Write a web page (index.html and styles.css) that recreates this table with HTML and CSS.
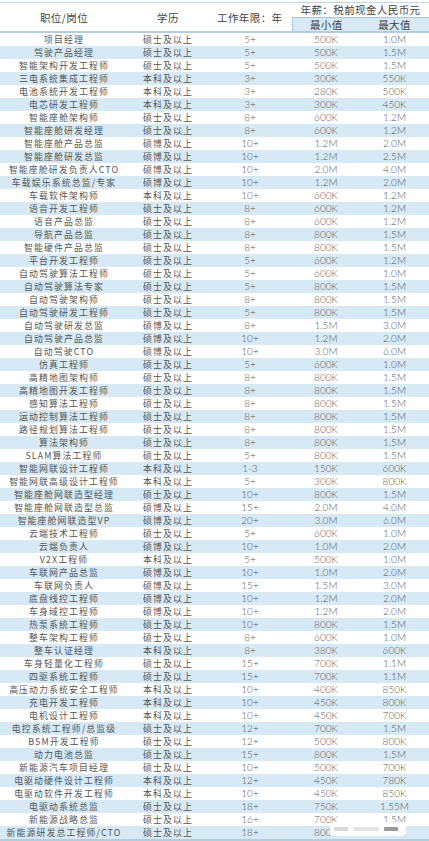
FILE: index.html
```html
<!DOCTYPE html>
<html lang="zh">
<head>
<meta charset="utf-8">
<title>薪酬表</title>
<link rel="stylesheet" href="styles.css">
</head>
<body>
<div class="sheet">
<table class="pay">
<colgroup><col class="c1"><col class="c2"><col class="c3"><col class="c4"><col class="c5"></colgroup>
<thead>
<tr class="h1"><th rowspan="2">职位/岗位</th><th rowspan="2">学历</th><th rowspan="2">工作年限：年</th><th colspan="2" class="salary">年薪：税前现金人民币元</th></tr>
<tr class="h2"><th class="sub first">最小值</th><th class="sub">最大值</th></tr>
</thead>
<tbody>
<tr><td>项目经理</td><td>硕士及以上</td><td>5+</td><td>500K</td><td>1.0M</td></tr>
<tr><td>驾驶产品经理</td><td>硕士及以上</td><td>5+</td><td>500K</td><td>1.5M</td></tr>
<tr><td>智能架构开发工程师</td><td>硕士及以上</td><td>5+</td><td>500K</td><td>1.5M</td></tr>
<tr><td>三电系统集成工程师</td><td>本科及以上</td><td>3+</td><td>300K</td><td>550K</td></tr>
<tr><td>电池系统开发工程师</td><td>本科及以上</td><td>3+</td><td>280K</td><td>500K</td></tr>
<tr><td>电芯研发工程师</td><td>本科及以上</td><td>3+</td><td>300K</td><td>450K</td></tr>
<tr><td>智能座舱架构师</td><td>硕士及以上</td><td>8+</td><td>600K</td><td>1.2M</td></tr>
<tr><td>智能座舱研发经理</td><td>硕士及以上</td><td>8+</td><td>600K</td><td>1.2M</td></tr>
<tr><td>智能座舱产品总监</td><td>硕博及以上</td><td>10+</td><td>1.2M</td><td>2.0M</td></tr>
<tr><td>智能座舱研发总监</td><td>硕博及以上</td><td>10+</td><td>1.2M</td><td>2.5M</td></tr>
<tr><td>智能座舱研发负责人CTO</td><td>硕博及以上</td><td>10+</td><td>2.0M</td><td>4.0M</td></tr>
<tr><td>车载娱乐系统总监/专家</td><td>硕博及以上</td><td>10+</td><td>1.2M</td><td>2.0M</td></tr>
<tr><td>车载软件架构师</td><td>本科及以上</td><td>10+</td><td>600K</td><td>1.2M</td></tr>
<tr><td>语音开发工程师</td><td>硕士及以上</td><td>8+</td><td>600K</td><td>1.2M</td></tr>
<tr><td>语音产品总监</td><td>硕士及以上</td><td>8+</td><td>600K</td><td>1.2M</td></tr>
<tr><td>导航产品总监</td><td>硕士及以上</td><td>8+</td><td>800K</td><td>1.5M</td></tr>
<tr><td>智能硬件产品总监</td><td>硕士及以上</td><td>8+</td><td>800K</td><td>1.5M</td></tr>
<tr><td>平台开发工程师</td><td>硕士及以上</td><td>5+</td><td>600K</td><td>1.2M</td></tr>
<tr><td>自动驾驶算法工程师</td><td>硕士及以上</td><td>5+</td><td>600K</td><td>1.0M</td></tr>
<tr><td>自动驾驶算法专家</td><td>硕士及以上</td><td>5+</td><td>800K</td><td>1.5M</td></tr>
<tr><td>自动驾驶架构师</td><td>硕士及以上</td><td>8+</td><td>800K</td><td>1.5M</td></tr>
<tr><td>自动驾驶研发工程师</td><td>硕士及以上</td><td>5+</td><td>800K</td><td>1.5M</td></tr>
<tr><td>自动驾驶研发总监</td><td>硕博及以上</td><td>8+</td><td>1.5M</td><td>3.0M</td></tr>
<tr><td>自动驾驶产品总监</td><td>硕博及以上</td><td>10+</td><td>1.2M</td><td>2.0M</td></tr>
<tr><td>自动驾驶CTO</td><td>硕博及以上</td><td>10+</td><td>3.0M</td><td>6.0M</td></tr>
<tr><td>仿真工程师</td><td>硕士及以上</td><td>5+</td><td>600K</td><td>1.0M</td></tr>
<tr><td>高精地图架构师</td><td>硕士及以上</td><td>8+</td><td>800K</td><td>1.5M</td></tr>
<tr><td>高精地图开发工程师</td><td>硕士及以上</td><td>8+</td><td>800K</td><td>1.5M</td></tr>
<tr><td>感知算法工程师</td><td>硕士及以上</td><td>8+</td><td>800K</td><td>1.5M</td></tr>
<tr><td>运动控制算法工程师</td><td>硕士及以上</td><td>8+</td><td>800K</td><td>1.5M</td></tr>
<tr><td>路径规划算法工程师</td><td>硕士及以上</td><td>8+</td><td>800K</td><td>1.5M</td></tr>
<tr><td>算法架构师</td><td>硕士及以上</td><td>8+</td><td>800K</td><td>1.5M</td></tr>
<tr><td>SLAM算法工程师</td><td>硕士及以上</td><td>5+</td><td>800K</td><td>1.5M</td></tr>
<tr><td>智能网联设计工程师</td><td>本科及以上</td><td>1-3</td><td>150K</td><td>600K</td></tr>
<tr><td>智能网联高级设计工程师</td><td>本科及以上</td><td>5+</td><td>300K</td><td>800K</td></tr>
<tr><td>智能座舱网联造型经理</td><td>硕士及以上</td><td>10+</td><td>800K</td><td>1.5M</td></tr>
<tr><td>智能座舱网联造型总监</td><td>硕博及以上</td><td>15+</td><td>2.0M</td><td>4.0M</td></tr>
<tr><td>智能座舱网联造型VP</td><td>硕博及以上</td><td>20+</td><td>3.0M</td><td>6.0M</td></tr>
<tr><td>云端技术工程师</td><td>硕士及以上</td><td>5+</td><td>600K</td><td>1.0M</td></tr>
<tr><td>云端负责人</td><td>硕博及以上</td><td>10+</td><td>1.0M</td><td>2.0M</td></tr>
<tr><td>V2X工程师</td><td>本科及以上</td><td>5+</td><td>500K</td><td>1.0M</td></tr>
<tr><td>车联网产品总监</td><td>硕博及以上</td><td>10+</td><td>1.0M</td><td>2.0M</td></tr>
<tr><td>车联网负责人</td><td>硕博及以上</td><td>15+</td><td>1.5M</td><td>3.0M</td></tr>
<tr><td>底盘线控工程师</td><td>硕博及以上</td><td>10+</td><td>1.2M</td><td>2.0M</td></tr>
<tr><td>车身域控工程师</td><td>硕博及以上</td><td>10+</td><td>1.2M</td><td>2.0M</td></tr>
<tr><td>热泵系统工程师</td><td>硕士及以上</td><td>10+</td><td>800K</td><td>1.5M</td></tr>
<tr><td>整车架构工程师</td><td>硕士及以上</td><td>8+</td><td>600K</td><td>1.0M</td></tr>
<tr><td>整车认证经理</td><td>本科及以上</td><td>8+</td><td>380K</td><td>600K</td></tr>
<tr><td>车身轻量化工程师</td><td>硕士及以上</td><td>15+</td><td>700K</td><td>1.1M</td></tr>
<tr><td>四驱系统工程师</td><td>硕士及以上</td><td>15+</td><td>700K</td><td>1.1M</td></tr>
<tr><td>高压动力系统安全工程师</td><td>本科及以上</td><td>10+</td><td>400K</td><td>850K</td></tr>
<tr><td>充电开发工程师</td><td>本科及以上</td><td>10+</td><td>450K</td><td>800K</td></tr>
<tr><td>电机设计工程师</td><td>本科及以上</td><td>10+</td><td>450K</td><td>700K</td></tr>
<tr><td>电控系统工程师/总监级</td><td>硕士及以上</td><td>12+</td><td>700K</td><td>1.5M</td></tr>
<tr><td>BSM开发工程师</td><td>硕士及以上</td><td>12+</td><td>500K</td><td>800K</td></tr>
<tr><td>动力电池总监</td><td>硕士及以上</td><td>15+</td><td>800K</td><td>1.5M</td></tr>
<tr><td>新能源汽车项目经理</td><td>硕士及以上</td><td>10+</td><td>500K</td><td>700K</td></tr>
<tr><td>电驱动硬件设计工程师</td><td>本科及以上</td><td>12+</td><td>450K</td><td>780K</td></tr>
<tr><td>电驱动软件开发工程师</td><td>本科及以上</td><td>10+</td><td>450K</td><td>850K</td></tr>
<tr><td>电驱动系统总监</td><td>硕士及以上</td><td>18+</td><td>750K</td><td>1.55M</td></tr>
<tr><td>新能源战略总监</td><td>硕士及以上</td><td>16+</td><td>700K</td><td>1.5M</td></tr>
<tr><td>新能源研发总工程师/CTO</td><td>硕士及以上</td><td>18+</td><td>800K</td><td>1.5M</td></tr>
</tbody>
</table>
<div class="mark" aria-hidden="true"><i class="bar b1"></i><i class="bar b2"></i><i class="bar b3"></i></div>
</div>
</body>
</html>
```

FILE: styles.css
```css
html, body {
  margin: 0;
  padding: 0;
  background: #ffffff;
}

.sheet {
  position: relative;
  width: 429px;
  padding-top: 2px;
}

.pay {
  width: 429px;
  border-collapse: collapse;
  table-layout: fixed;
  font-family: "Noto Sans CJK SC", "Noto Sans", sans-serif;
  border-top: 1px solid #c4d8e4;
  border-bottom: 2px solid #b3cddc;
}

.c1 { width: 128px; }
.c2 { width: 80px; }
.c3 { width: 84px; }
.c4 { width: 68px; }
.c5 { width: 69px; }

.pay th {
  font-weight: normal;
  font-size: 10.5px;
  letter-spacing: 0.4px;
  color: #3f3f3f;
  padding: 0;
  text-align: center;
  line-height: 13px;
}

.h1 th { height: 14px; }
.h2 th { height: 13px; }

.pay thead {
  border-bottom: 2px solid #b3cddc;
}

.salary {
  vertical-align: top;
}

.sub {
  background: #d7eaf6;
  border-top: 1px solid #a9c7d9;
}

.sub.first {
  border-left: 1px solid #a9c7d9;
}

.pay td {
  height: 13px;
  padding: 0;
  line-height: 13px;
  font-size: 8.9px;
  letter-spacing: 1.1px;
  text-align: center;
  color: #555555;
  white-space: nowrap;
  overflow: hidden;
}

.pay td:nth-child(n+3) {
  font-family: "Lato", "Liberation Sans", sans-serif;
  font-weight: 300;
  letter-spacing: 0;
  color: #5a5a5a;
  font-size: 10px;
}

.pay tbody tr:nth-child(even) td {
  background: #d6e9f5;
}

.mark {
  position: absolute;
  left: 330px;
  top: 822px;
  width: 76px;
  height: 14px;
  background: rgba(255, 255, 255, 0.9);
  border-radius: 3px;
  display: flex;
  align-items: center;
  gap: 5px;
  padding: 0 4px;
  box-sizing: border-box;
}

.bar {
  display: block;
  height: 4px;
  border-radius: 1px;
  background: #d9d9d9;
}

.b1 { width: 14px; }
.b2 { width: 26px; background: #e4e4e4; }
.b3 { width: 14px; background: #9a9a9a; }
```
